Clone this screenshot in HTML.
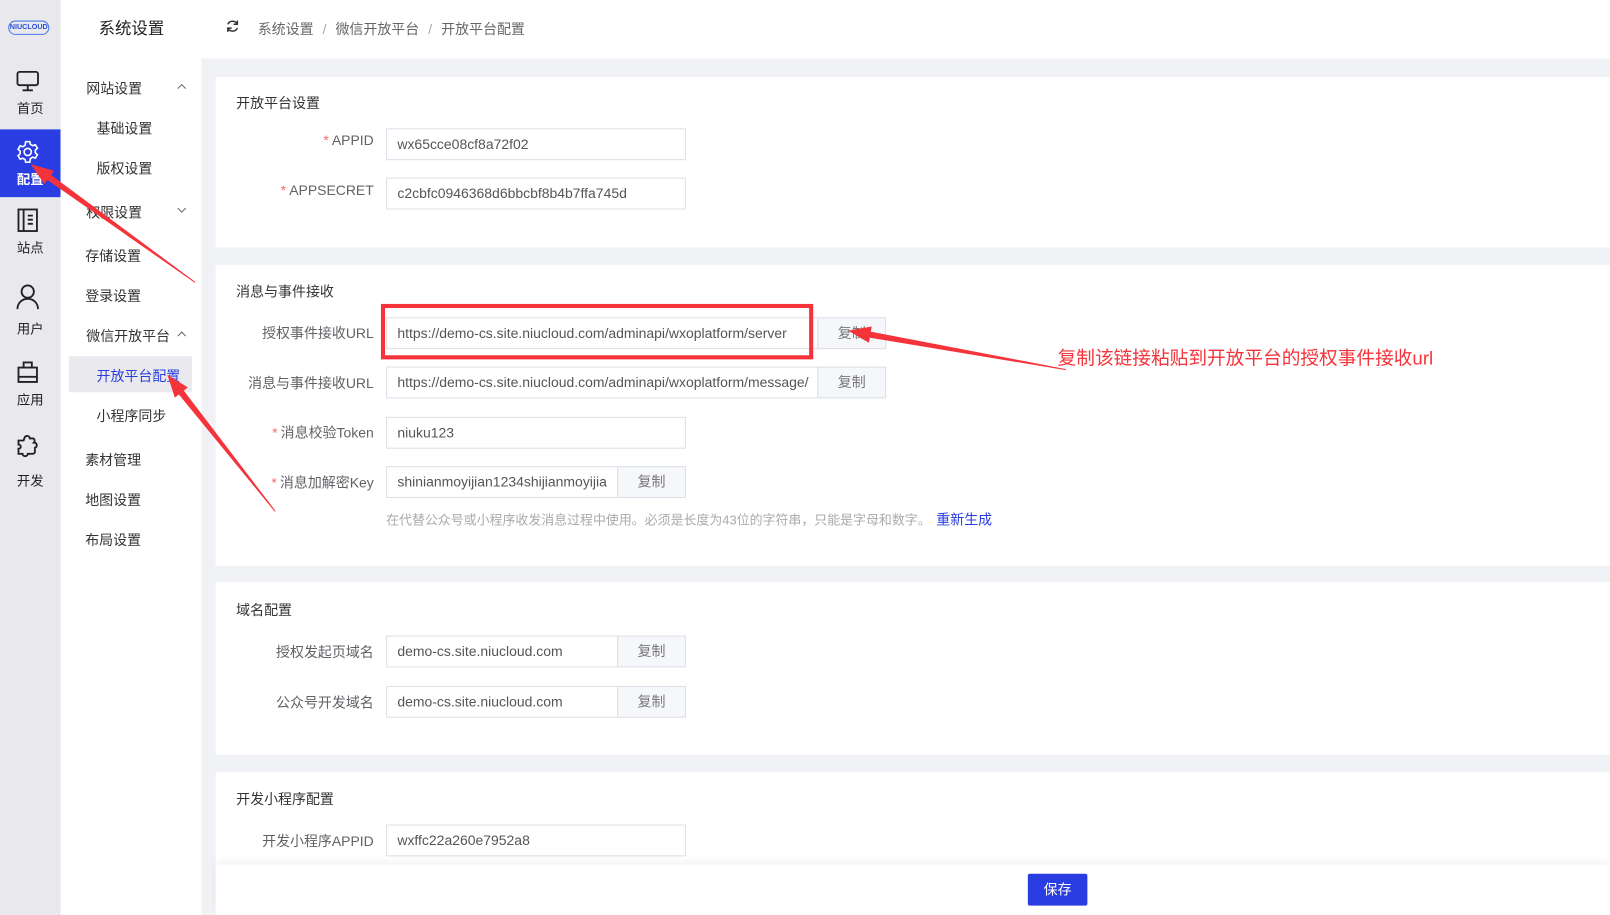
<!DOCTYPE html>
<html><head><meta charset="utf-8"><style>
*{margin:0;padding:0;box-sizing:border-box}
html,body{width:1610px;height:915px;overflow:hidden;background:#fff}
body{font-family:"Liberation Sans","Noto Sans CJK SC",sans-serif;color:#333}
#w{position:absolute;left:0;top:0;width:1568px;height:891px;transform:scale(1.0268);transform-origin:0 0;background:#f0f2f5}
.a{position:absolute;white-space:nowrap}
.nav{position:absolute;left:0;top:0;width:59px;height:891px;background:#e9e9ed}
.nv{position:absolute;left:0;width:59px;text-align:center;font-size:13px;color:#222}
.side{position:absolute;left:59px;top:0;width:137px;height:891px;background:#fff}
.top{position:absolute;left:196px;top:0;width:1372px;height:57px;background:#fff}
.m{position:absolute;font-size:13.6px;color:#333;white-space:nowrap}
.card{position:absolute;left:210px;width:1358px;background:#fff}
.st{position:absolute;left:20px;font-size:13.6px;color:#333}
.lb{position:absolute;right:1204px;font-size:13.6px;color:#606266;text-align:right;white-space:nowrap;margin-top:-2px}
.lb i{color:#f56c6c;font-style:normal;margin-right:3px}
.in{position:absolute;left:166px;height:31px;border:1px solid #dcdfe6;background:#fff;font-size:13.6px;color:#555;line-height:29px;padding-left:10px;white-space:nowrap;overflow:hidden}
.bt{position:absolute;height:31px;border:1px solid #dcdfe6;background:#f5f7fa;font-size:13.6px;color:#777;line-height:29px;text-align:center}
.chev{position:absolute;width:6px;height:6px;border-left:1px solid #666;border-top:1px solid #666}
</style></head><body><div id="w">
<div class="nav">
 <div class="a" style="left:8px;top:20px;width:40px;height:14px;border:1.5px solid #4a74e8;border-radius:8px;font-size:7px;color:#2c4fd8;font-weight:bold;line-height:11px;text-align:center">NIUCLOUD</div>
 <svg class="a" style="left:15px;top:68px" width="24" height="22" viewBox="0 0 24 22" fill="none" stroke="#222" stroke-width="1.8"><rect x="2" y="2" width="20" height="13" rx="2"/><path d="M12 15v4M7 20h10"/></svg>
 <div class="nv" style="top:95px">首页</div>
 <div class="a" style="left:0;top:126px;width:59px;height:66px;background:#2a3de2"></div>
 <svg class="a" style="left:15px;top:136px" width="24" height="24" viewBox="0 0 24 24" fill="none" stroke="#fff" stroke-width="1.6"><path d="M10 2h4l.6 2.6 2.3 1.3 2.5-.9 2 3.4-2 1.8v2.6l2 1.8-2 3.4-2.5-.9-2.3 1.3L14 22h-4l-.6-2.6-2.3-1.3-2.5.9-2-3.4 2-1.8v-2.6l-2-1.8 2-3.4 2.5.9 2.3-1.3z"/><circle cx="12" cy="12" r="3.5"/></svg>
 <div class="nv" style="top:164px;color:#fff;font-weight:bold">配置</div>
 <svg class="a" style="left:17px;top:203px" width="20" height="24" viewBox="0 0 20 24" fill="none" stroke="#222" stroke-width="1.8"><rect x="1" y="1" width="18" height="21"/><path d="M6 1v21M10 7h5M10 11h5M10 15h5"/></svg>
 <div class="nv" style="top:231px">站点</div>
 <svg class="a" style="left:15px;top:276px" width="24" height="26" viewBox="0 0 24 26" fill="none" stroke="#222" stroke-width="1.8"><circle cx="12" cy="8" r="6"/><path d="M2 25c0-6 4.5-10 10-10s10 4 10 10"/></svg>
 <div class="nv" style="top:310px">用户</div>
 <svg class="a" style="left:17px;top:350px" width="20" height="24" viewBox="0 0 20 24" fill="none" stroke="#222" stroke-width="1.8"><path d="M6 8V3h8v5M1 8h18v14H1zM1 17h18"/></svg>
 <div class="nv" style="top:379px">应用</div>
 <svg class="a" style="left:15px;top:423px" width="24" height="24" viewBox="0 0 24 24" fill="none" stroke="#222" stroke-width="1.8"><path d="M9 3c1-2 5-2 5 1l3 0c2 0 2 3 1 4 3 0 4 4 1 5l0 4c0 2-2 2-4 2h-3c0 3-5 3-5 0H3v-5c3 0 3-4 0-4V6h5z"/></svg>
 <div class="nv" style="top:458px">开发</div>
</div>
<div class="side">
 <div class="a" style="left:37px;top:14px;font-size:16px;color:#222">系统设置</div>
 <div class="m" style="left:25px;top:75px">网站设置</div><div class="chev" style="left:115px;top:83px;transform:rotate(45deg)"></div>
 <div class="m" style="left:35px;top:114px">基础设置</div>
 <div class="m" style="left:35px;top:153px">版权设置</div>
 <div class="m" style="left:25px;top:196px">权限设置</div><div class="chev" style="left:115px;top:200px;transform:rotate(225deg)"></div>
 <div class="m" style="left:24px;top:238px">存储设置</div>
 <div class="m" style="left:24px;top:277px">登录设置</div>
 <div class="m" style="left:25px;top:316px">微信开放平台</div><div class="chev" style="left:115px;top:324px;transform:rotate(45deg)"></div>
 <div class="a" style="left:8px;top:347px;width:120px;height:35px;background:#eaeaee;border-radius:2px"></div>
 <div class="m" style="left:35px;top:355px;color:#2a3de2">开放平台配置</div>
 <div class="m" style="left:35px;top:394px">小程序同步</div>
 <div class="m" style="left:24px;top:437px">素材管理</div>
 <div class="m" style="left:24px;top:476px">地图设置</div>
 <div class="m" style="left:24px;top:515px">布局设置</div>
</div>
<div class="top">
 <svg class="a" style="left:24px;top:19px" width="13" height="13" viewBox="0 0 14 14" fill="none" stroke="#333" stroke-width="1.6"><path d="M12 5A5.5 5.5 0 0 0 2 5M2 9a5.5 5.5 0 0 0 10 0M12 1v4H8M2 13V9h4"/></svg>
 <div class="a" style="left:55px;top:17px;font-size:13.6px;color:#666">系统设置 <span style="margin:0 5px;color:#aaa">/</span> 微信开放平台 <span style="margin:0 5px;color:#aaa">/</span> 开放平台配置</div>
</div>

<div class="card" style="top:75px;height:166px">
 <div class="st" style="top:14px">开放平台设置</div>
 <div class="lb" style="top:56px"><i>*</i>APPID</div><div class="in" style="top:50px;width:292px">wx65cce08cf8a72f02</div>
 <div class="lb" style="top:105px"><i>*</i>APPSECRET</div><div class="in" style="top:98px;width:292px">c2cbfc0946368d6bbcbf8b4b7ffa745d</div>
</div>
<div class="card" style="top:258px;height:293px">
 <div class="st" style="top:15px">消息与事件接收</div>
 <div class="lb" style="top:57px">授权事件接收URL</div><div class="in" style="top:51px;width:421px">https://demo-cs.site.niucloud.com/adminapi/wxoplatform/server</div><div class="bt" style="left:586px;top:51px;width:67px">复制</div>
 <div class="lb" style="top:106px">消息与事件接收URL</div><div class="in" style="top:99px;width:421px">https://demo-cs.site.niucloud.com/adminapi/wxoplatform/message/</div><div class="bt" style="left:586px;top:99px;width:67px">复制</div>
 <div class="lb" style="top:154px"><i>*</i>消息校验Token</div><div class="in" style="top:148px;width:292px">niuku123</div>
 <div class="lb" style="top:203px"><i>*</i>消息加解密Key</div><div class="in" style="top:196px;width:226px">shinianmoyijian1234shijianmoyijia</div><div class="bt" style="left:391px;top:196px;width:67px">复制</div>
 <div class="a" style="left:166px;top:237px;font-size:12.6px;color:#aaa">在代替公众号或小程序收发消息过程中使用。必须是长度为43位的字符串，只能是字母和数字。 <span style="color:#2a3de2;font-size:13.6px;margin-left:2px">重新生成</span></div>
</div>
<div class="card" style="top:567px;height:168px">
 <div class="st" style="top:16px">域名配置</div>
 <div class="lb" style="top:59px">授权发起页域名</div><div class="in" style="top:52px;width:226px">demo-cs.site.niucloud.com</div><div class="bt" style="left:391px;top:52px;width:67px">复制</div>
 <div class="lb" style="top:108px">公众号开发域名</div><div class="in" style="top:101px;width:226px">demo-cs.site.niucloud.com</div><div class="bt" style="left:391px;top:101px;width:67px">复制</div>
</div>
<div class="card" style="top:752px;height:139px">
 <div class="st" style="top:15px">开发小程序配置</div>
 <div class="lb" style="top:58px">开发小程序APPID</div><div class="in" style="top:51px;width:292px">wxffc22a260e7952a8</div>
</div>
<div class="a" style="left:210px;top:842px;width:1358px;height:48px;background:#fff;box-shadow:0 -3px 8px rgba(0,0,0,.05)"></div>
<div class="a" style="left:1001px;top:851px;width:58px;height:31px;background:#2a3de2;border-radius:2px;color:#fff;font-size:13.6px;line-height:31px;text-align:center">保存</div>

<div class="a" style="left:371px;top:296px;width:421px;height:54px;border:4px solid #f5333a"></div>
<div class="a" style="left:1030px;top:335px;font-size:18.2px;color:#f5333a">复制该链接粘贴到开放平台的授权事件接收url</div>
<svg class="a" style="left:0;top:0" width="1568" height="891">
 <g fill="#f5333a">
 <polygon points="826,322 849,318 848.1,323 1038.1,359.5 1037.9,360.5 847.1,328.9 846.2,333.8"/>
 <polygon points="30,160 52.6,166.3 49.7,170.4 190.3,274.6 189.7,275.4 46.1,175.2 43.2,179.3"/>
 <polygon points="163,365 182.9,377.3 179,380.4 268.4,497.7 267.6,498.3 174.2,384.2 170.3,387.3"/>
 </g>
</svg>
</div></body></html>
